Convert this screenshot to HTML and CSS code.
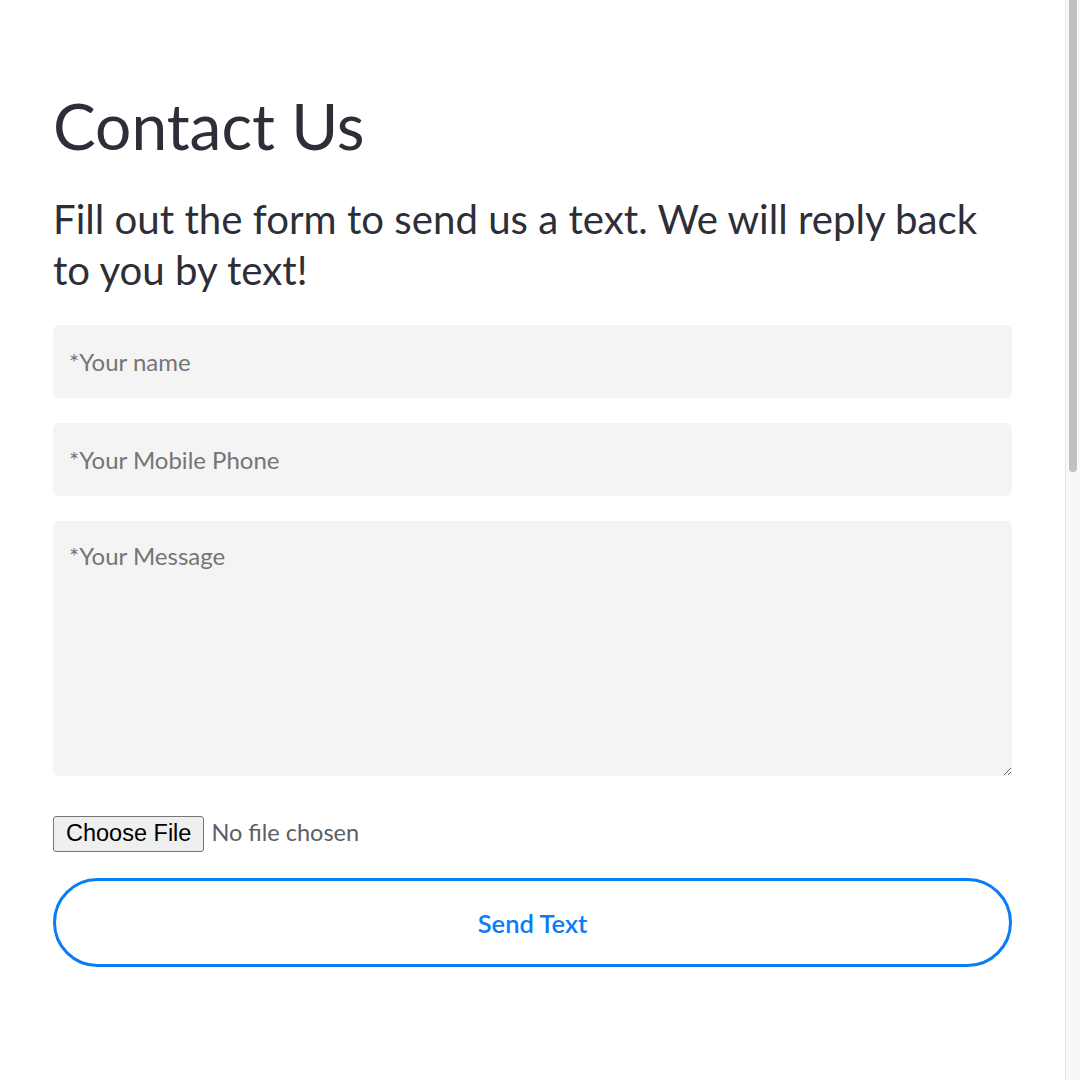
FILE: index.html
```html
<!DOCTYPE html>
<html lang="en">
<head>
<meta charset="utf-8">
<title>Contact Us</title>
<link rel="stylesheet" href="styles.css">
</head>
<body>
<main class="page">
  <section class="contact">
    <h1 class="title">Contact Us</h1>
    <p class="lead">Fill out the form to send us a text. We will reply back to you by text!</p>
    <form class="form">
      <input class="field" type="text" placeholder="*Your name">
      <input class="field" type="tel" placeholder="*Your Mobile Phone">
      <textarea class="field area" placeholder="*Your Message"></textarea>
      <input class="file" type="file">
      <button class="send" type="button">Send Text</button>
    </form>
  </section>
</main>
<div class="scrollbar" aria-hidden="true"><div class="thumb"></div></div>
</body>
</html>
```
FILE: styles.css
```css
html, body {
  margin: 0;
  padding: 0;
  background: #ffffff;
}
body {
  font-family: "Lato", "Open Sans", sans-serif;
  color: #2e2e38;
}
.contact {
  padding: 87px 68px 0 53px;
}
.title {
  margin: 0;
  font-size: 64px;
  font-weight: 400;
  line-height: 78px;
  color: #2e2e38;
}
.lead {
  margin: 28px 0 0;
  font-size: 40.2px;
  line-height: 51px;
  color: #2e2e38;
}
.form {
  margin-top: 30px;
  display: flex;
  flex-direction: column;
  gap: 25px;
}
.field {
  display: block;
  box-sizing: border-box;
  width: 100%;
  height: 73px;
  margin: 0;
  padding: 0 16px;
  border: none;
  border-radius: 6px;
  background: #f4f4f4;
  font-family: "Lato", sans-serif;
  font-size: 24px;
  color: #333;
  outline: none;
}
.field::placeholder {
  color: #757575;
}
.area {
  height: 255px;
  padding: 20px 16px;
  resize: vertical;
}
.file {
  margin-top: 15px;
  font-family: "Lato", sans-serif;
  font-size: 23.5px;
  color: #5c5e66;
}
.file::file-selector-button {
  font-family: "Liberation Sans", Arial, sans-serif;
  font-size: 23.5px;
  color: #000;
  background: #efefef;
  border: 1px solid #767676;
  border-radius: 3px;
  padding: 3px 12px 4px;
  margin-right: 7px;
}
.send {
  margin-top: 1px;
  box-sizing: border-box;
  width: 100%;
  height: 89px;
  border: 3px solid #0a7cf4;
  border-radius: 45px;
  background: #fff;
  color: #0a7cf4;
  font-family: "Lato", sans-serif;
  font-size: 25.5px;
  font-weight: 600;
  cursor: pointer;
}
.scrollbar {
  position: fixed;
  top: 0;
  right: 0;
  bottom: 0;
  width: 14px;
  background: #f8f8f8;
  border-left: 1px solid #e6e6e6;
}
.thumb {
  margin: 0 3px 0 3px;
  height: 472px;
  background: #c1c1c1;
  border-radius: 0 0 4px 4px;
}
```
